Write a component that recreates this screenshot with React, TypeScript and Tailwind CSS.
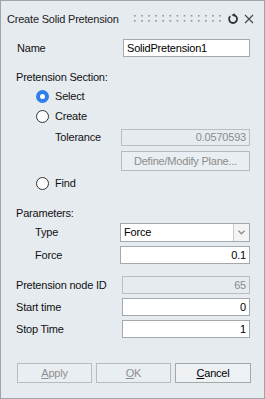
import React from "react";

const font = { fontFamily: '"Liberation Sans", Arial, sans-serif' };

function Radio({ checked, label }: { checked?: boolean; label: string }) {
  return (
    <div className="flex items-center h-[20px] pl-[35px]">
      {checked ? (
        <div className="w-[13px] h-[13px] rounded-full bg-[#2f7fe8] flex items-center justify-center">
          <div className="w-[5px] h-[5px] rounded-full bg-white" />
        </div>
      ) : (
        <div className="w-[13px] h-[13px] rounded-full bg-white border border-[#333333]" />
      )}
      <span className="ml-[6px]">{label}</span>
    </div>
  );
}

function Dots() {
  const cols = Array.from({ length: 13 }, (_, i) => i);
  return (
    <svg width="90" height="10" viewBox="0 0 90 10" className="block">
      {cols.map((i) => (
        <g key={i} fill="#8e949a">
          <rect x={1 + i * 7.1} y={1} width={1.6} height={1.6} />
          <rect x={1 + i * 7.1} y={6} width={1.6} height={1.6} />
        </g>
      ))}
    </svg>
  );
}

export default function App() {
  return (
    <div
      className="w-[265px] h-[399px] bg-[#e6ebf0] border border-[#9ea4aa] text-[11px] tracking-[-0.2px] text-[#111] flex flex-col"
      style={font}
    >
      {/* Title */}
      <div className="mt-[6px] h-[24px] flex items-center pl-[6px] whitespace-nowrap">
        <span className="text-[#222] shrink-0">Create Solid Pretension</span>
        <div className="ml-[14px] shrink-0">
          <Dots />
        </div>
        <svg width="12" height="12" viewBox="0 0 12 12" className="ml-[4px] shrink-0">
          <path d="M3.2 3.2 A4 4 0 1 0 6 2" fill="none" stroke="#333" strokeWidth="1.8" />
          <path d="M4.8 0.2 L8 2 L4.8 3.8 Z" fill="#333" transform="rotate(180 6.2 2)" />
        </svg>
        <svg width="10" height="10" viewBox="0 0 10 10" className="ml-[5px] shrink-0">
          <path d="M1 1 L9 9 M9 1 L1 9" stroke="#444" strokeWidth="1.1" />
        </svg>
      </div>

      {/* Name */}
      <div className="mt-[8px] h-[18px] flex items-center pl-[16px] pr-[14px]">
        <span className="flex-1">Name</span>
        <div className="w-[127px] h-[18px] bg-white border border-[#a4a9ae] flex items-center pl-[3px] text-black">
          SolidPretension1
        </div>
      </div>

      {/* Pretension Section */}
      <div className="mt-[11px] h-[18px] flex items-center pl-[15px]">Pretension Section:</div>
      <Radio checked label="Select" />
      <Radio label="Create" />

      <div className="mt-[3px] h-[17px] flex items-center pl-[54px] pr-[14px]">
        <span className="flex-1">Tolerance</span>
        <div className="w-[129px] h-[17px] border border-[#babec2] flex items-center justify-end pr-[3px] text-[#8c8c8c]">
          0.0570593
        </div>
      </div>
      <div className="mt-[5px] h-[20px] flex justify-end pr-[14px]">
        <div className="w-[129px] h-[20px] border border-[#b6babe] bg-[#e9eef2] flex items-center justify-center text-[#8c8c8c]">
          Define/Modify Plane...
        </div>
      </div>
      <div className="mt-[2px]">
        <Radio label="Find" />
      </div>

      {/* Parameters */}
      <div className="mt-[12px] h-[16px] flex items-center pl-[15px]">Parameters:</div>
      <div className="mt-[2px] h-[19px] flex items-center pl-[34px] pr-[14px]">
        <span className="flex-1">Type</span>
        <div className="w-[130px] h-[19px] bg-white border border-[#a4a9ae] flex items-center text-black">
          <span className="flex-1 pl-[3px]">Force</span>
          <div className="w-[16px] h-full border-l border-[#c9cdd1] bg-[#f3f4f5] flex items-center justify-center">
            <svg width="7" height="5" viewBox="0 0 7 5">
              <path d="M0.5 0.8 L3.5 3.8 L6.5 0.8" fill="none" stroke="#8a8f94" strokeWidth="1.4" />
            </svg>
          </div>
        </div>
      </div>
      <div className="mt-[4px] h-[18px] flex items-center pl-[34px] pr-[14px]">
        <span className="flex-1">Force</span>
        <div className="w-[130px] h-[18px] bg-white border border-[#a4a9ae] flex items-center justify-end pr-[3px] text-black">
          0.1
        </div>
      </div>

      {/* Node / times */}
      <div className="mt-[12px] h-[18px] flex items-center pl-[15px] pr-[14px]">
        <span className="flex-1">Pretension node ID</span>
        <div className="w-[128px] h-[18px] border border-[#babec2] flex items-center justify-end pr-[3px] text-[#8c8c8c]">
          65
        </div>
      </div>
      <div className="mt-[4px] h-[18px] flex items-center pl-[15px] pr-[14px]">
        <span className="flex-1">Start time</span>
        <div className="w-[128px] h-[18px] bg-white border border-[#a4a9ae] flex items-center justify-end pr-[3px] text-black">
          0
        </div>
      </div>
      <div className="mt-[4px] h-[18px] flex items-center pl-[15px] pr-[14px]">
        <span className="flex-1">Stop Time</span>
        <div className="w-[128px] h-[18px] bg-white border border-[#a4a9ae] flex items-center justify-end pr-[3px] text-black">
          1
        </div>
      </div>

      {/* Buttons */}
      <div className="mt-[25px] h-[20px] flex pl-[16px] gap-[4px]">
        <div className="w-[75px] h-[20px] border border-[#b8bcc0] bg-[#e9eef2] flex items-center justify-center text-[#8f8f8f]">
          <span><span className="underline">A</span>pply</span>
        </div>
        <div className="w-[75px] h-[20px] border border-[#b8bcc0] bg-[#e9eef2] flex items-center justify-center text-[#8f8f8f]">
          <span><span className="underline">O</span>K</span>
        </div>
        <div className="w-[76px] h-[20px] border border-[#a3a8ad] bg-[#edf1f4] flex items-center justify-center text-black">
          <span><span className="underline">C</span>ancel</span>
        </div>
      </div>
    </div>
  );
}
